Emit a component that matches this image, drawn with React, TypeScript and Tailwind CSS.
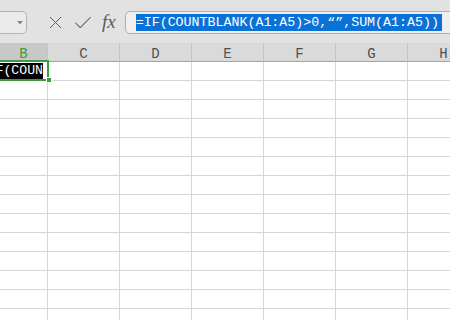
import { X, Check } from "lucide-react";

const cols = ["B", "C", "D", "E", "F", "G", "H"];
const widths = ["w-[48px]", "w-[72px]", "w-[72px]", "w-[72px]", "w-[72px]", "w-[72px]", "w-[72px]"];
const rows = Array.from({ length: 14 }, (_, i) => i);
const mono = { fontFamily: '"Liberation Mono", "Noto Sans CJK SC", monospace' };

const FormulaBar: React.FC = () => {
    return (
        <div className="h-[43px] bg-[#e2e2e2] flex items-start pt-[11px]">
            <div className="w-[27px] h-[23px] shrink-0 bg-[#ebebeb] border border-l-0 border-[#b4b4b4] rounded-r-[5px] flex items-center justify-end pr-[3px]">
                <svg width="6" height="4" viewBox="0 0 6 4">
                    <path d="M0 0 L6 0 L3 3.5 Z" fill="#8a8a8a" />
                </svg>
            </div>
            <div className="flex items-center h-[23px] ml-[18px] gap-[6px] text-[#5a5a5a]">
                <X size={21} strokeWidth={1.1} />
                <Check size={22} strokeWidth={1.1} />
                <span
                    className="italic text-[19px] leading-none ml-[2px] -mt-[3px]"
                    style={{ fontFamily: '"Liberation Serif", serif' }}
                >
                    fx
                </span>
            </div>
            <div className="ml-[9px] h-[23px] w-[340px] shrink-0 bg-[#efefef] border border-[#b0b0b0] rounded-[5px] flex items-center pl-[10px]">
                <span
                    className="bg-[#0a72d6] text-white text-[13.3px] leading-[17px] h-[17px] pr-[3px] whitespace-nowrap"
                    style={mono}
                >
                    =IF(COUNTBLANK(A1:A5)&gt;0,“”,SUM(A1:A5))
                </span>
            </div>
        </div>
    );
};

const App: React.FC = () => {
    return (
        <div className="relative w-[450px] h-[320px] overflow-hidden bg-white">
            <FormulaBar />
            <div className="flex h-[19px] bg-[#dadada] border-b border-[#a3a3a3]">
                {cols.map((c, i) => (
                    <div
                        key={c}
                        className={`${widths[i]} shrink-0 border-r border-[#c4c4c4] flex items-center justify-center text-[14px] leading-none pt-[3px] ${
                            i === 0 ? "bg-[#c8c8c8] text-[#3b9a3b]" : "text-[#505050]"
                        }`}
                        style={mono}
                    >
                        {c}
                    </div>
                ))}
                <div className="flex-1" />
            </div>
            {rows.map((r) => (
                <div key={r} className="flex h-[19px] border-b border-[#d6d6d6]">
                    {cols.map((c, i) => (
                        <div key={c} className={`${widths[i]} shrink-0 border-r border-[#d6d6d6] overflow-hidden`}>
                            {r === 0 && i === 0 && (
                                <div className="flex justify-end pr-[4px] pt-[1px]">
                                    <span
                                        className="bg-black text-white text-[13.2px] leading-[16px] h-[16px] whitespace-nowrap"
                                        style={mono}
                                    >
                                        =IF(COUN
                                    </span>
                                </div>
                            )}
                        </div>
                    ))}
                    <div className="flex-1" />
                </div>
            ))}
            <div className="absolute left-[-3px] top-[60px] w-[52px] h-[21px] border-2 border-[#3c9c3c]" />
            <div className="absolute left-[46px] top-[77px] w-[6px] h-[6px] bg-[#3c9c3c] border border-white" />
        </div>
    );
};

export default App;
